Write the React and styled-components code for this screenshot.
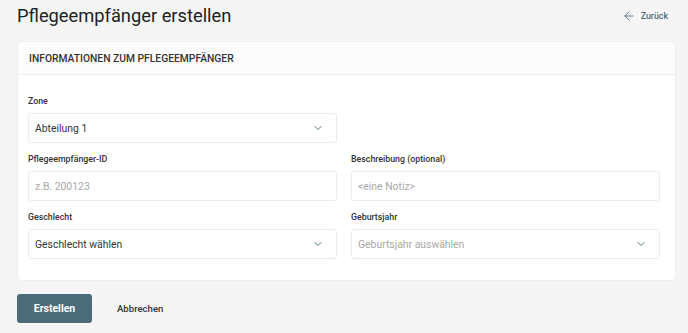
import React from 'react';
import styled, { createGlobalStyle } from 'styled-components';
import { ArrowLeft, ChevronDown } from 'lucide-react';

const GlobalStyle = createGlobalStyle`
  body {
    margin: 0;
    background: #f5f5f5;
    font-family: Roboto, "Noto Sans", sans-serif;
    color: #2b2b2b;
  }
`;

const App = () => {
  return (
    <Page>
      <GlobalStyle />
      <TopBar>
        <Title>Pflegeempfänger erstellen</Title>
        <BackLink>
          <ArrowLeft size={14} strokeWidth={1.5} />
          Zurück
        </BackLink>
      </TopBar>

      <Card>
        <CardHeader>Informationen zum Pflegeempfänger</CardHeader>
        <CardBody>
          <Field>
            <Label>Zone</Label>
            <Box>
              <Value>Abteilung 1</Value>
              <Chevron />
            </Box>
          </Field>
          <span />

          <Field>
            <Label>Pflegeempfänger-ID</Label>
            <Box>
              <Value $placeholder>z.B. 200123</Value>
            </Box>
          </Field>
          <Field>
            <Label>Beschreibung (optional)</Label>
            <Box>
              <Value $placeholder>&lt;eine Notiz&gt;</Value>
            </Box>
          </Field>

          <Field>
            <Label>Geschlecht</Label>
            <Box>
              <Value>Geschlecht wählen</Value>
              <Chevron />
            </Box>
          </Field>
          <Field>
            <Label>Geburtsjahr</Label>
            <Box>
              <Value $placeholder>Geburtsjahr auswählen</Value>
              <Chevron />
            </Box>
          </Field>
        </CardBody>
      </Card>

      <Actions>
        <PrimaryButton>Erstellen</PrimaryButton>
        <TextButton>Abbrechen</TextButton>
      </Actions>
    </Page>
  );
};

const Chevron = () => (
  <ChevronWrap>
    <ChevronDown size={12} strokeWidth={2} />
  </ChevronWrap>
);

export default App;

const Page = styled.div`
  width: 688px;
  height: 333px;
  padding: 0 12px 0 17px;
  box-sizing: border-box;
  overflow: hidden;
`;

const TopBar = styled.div`
  display: flex;
  justify-content: space-between;
  align-items: center;
  height: 32px;
  margin-bottom: 9px;
`;

const Title = styled.h1`
  margin: 0;
  font-size: 18.3px;
  font-weight: 400;
  color: #222;
  line-height: 1;
`;

const BackLink = styled.a`
  display: flex;
  align-items: center;
  gap: 5px;
  margin-right: 8px;
  font-size: 8.8px;
  font-weight: 500;
  color: #4f6b79;
  cursor: pointer;
`;

const Card = styled.div`
  background: #fff;
  border: 1px solid #ededed;
  border-radius: 5px;
  overflow: hidden;
`;

const CardHeader = styled.div`
  height: 32px;
  display: flex;
  align-items: center;
  padding: 0 11px;
  background: #fcfcfc;
  border-bottom: 1px solid #efefef;
  font-size: 10.3px;
  font-weight: 500;
  text-transform: uppercase;
  color: #333;
`;

const CardBody = styled.div`
  display: grid;
  grid-template-columns: 309px 309px;
  column-gap: 14px;
  row-gap: 10px;
  padding: 20px 15px 21px 10px;
`;

const Field = styled.div`
  display: flex;
  flex-direction: column;
  gap: 6px;
`;

const Label = styled.label`
  font-size: 8.8px;
  font-weight: 500;
  line-height: 12px;
  color: #333;
`;

const Box = styled.div`
  height: 28px;
  display: flex;
  align-items: center;
  justify-content: space-between;
  padding: 0 6px;
  border: 1px solid #ececec;
  border-radius: 3px;
  background: #fff;
`;

const Value = styled.span`
  font-size: 10.4px;
  color: ${(p) => (p.$placeholder ? '#a8a8a8' : '#333')};
`;

const ChevronWrap = styled.span`
  display: flex;
  margin-right: 6px;
  color: #4e7586;
`;

const Actions = styled.div`
  display: flex;
  align-items: center;
  gap: 25px;
  margin-top: 13px;
`;

const PrimaryButton = styled.button`
  width: 75px;
  height: 29px;
  border: none;
  border-radius: 3px;
  background: #4b6b78;
  color: #fff;
  font-family: Roboto, sans-serif;
  font-size: 10.5px;
  font-weight: 700;
`;

const TextButton = styled.button`
  border: none;
  background: none;
  padding: 0;
  font-family: Roboto, sans-serif;
  font-size: 9.6px;
  font-weight: 500;
  color: #333;
`;
